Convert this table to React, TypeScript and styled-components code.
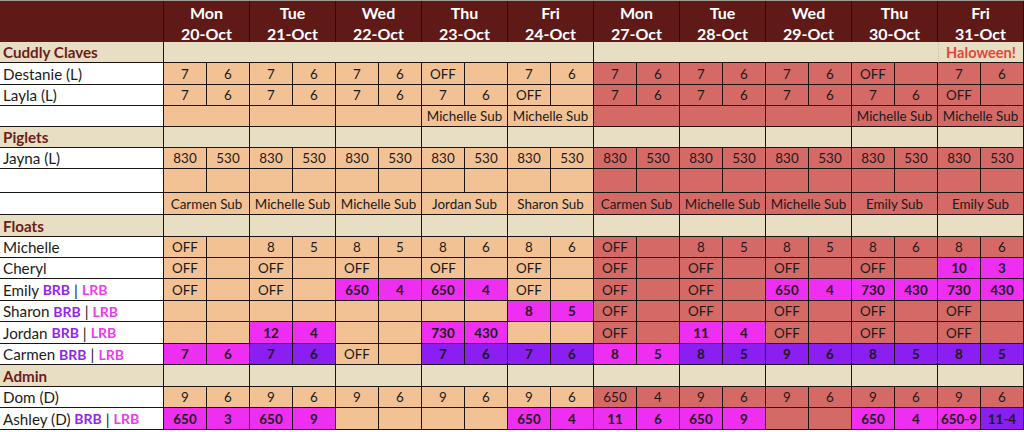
import React from "react";
import styled, { createGlobalStyle } from "styled-components";

const Global = createGlobalStyle`
  html, body { margin: 0; padding: 0; background: #ffffff; }
  body { font-family: Lato, "Open Sans", "Liberation Sans", sans-serif; }
`;

const C = {
  header: "#5f1a17",
  beige: "#e7dec3",
  peach: "#f2c194",
  red: "#d46966",
  magenta: "#ee2ef1",
  purple: "#8b1ef1",
  line: "#1c1410",
  maroon: "#6c1d1b",
  halo: "#e8443c",
};

const Sheet = styled.div`
  width: 1024px;
  border-top: 1px solid #a39c96;
  font-family: Lato, "Open Sans", "Liberation Sans", sans-serif;
  font-size: 13.4px;
  color: #1b1b1b;
`;

const Row = styled.div<{ $h: number }>`
  display: grid;
  grid-template-columns: 164px repeat(20, 43px);
  height: ${(p) => p.$h}px;
`;

const NameCell = styled.div<{ $section?: boolean }>`
  box-sizing: border-box;
  display: flex;
  align-items: center;
  padding-left: 3px;
  white-space: nowrap;
  border-right: 1px solid ${C.line};
  border-bottom: 1px solid ${C.line};
  background: ${(p) => (p.$section ? C.beige : "#ffffff")};
  color: ${(p) => (p.$section ? C.maroon : "#1b1b1b")};
  font-weight: ${(p) => (p.$section ? 700 : 400)};
  font-size: 15.2px;
`;

const HeaderCorner = styled.div`
  box-sizing: border-box;
  background: ${C.header};
  border-right: 1px solid ${C.line};
  border-bottom: 1px solid ${C.line};
`;

const DayHead = styled.div`
  grid-column: span 2;
  box-sizing: border-box;
  background: ${C.header};
  border-right: 1px solid ${C.line};
  border-bottom: 1px solid ${C.line};
  color: #ffffff;
  font-weight: 700;
  font-size: 16px;
  display: flex;
  flex-direction: column;
  align-items: center;
  justify-content: center;
  line-height: 21px;
  padding-top: 1px;
`;

const Cell = styled.div<{
  $span: number;
  $bg: string;
  $bold?: boolean;
  $noRight?: boolean;
  $dashLeft?: boolean;
  $fg?: string;
  $big?: boolean;
}>`
  grid-column: span ${(p) => p.$span};
  box-sizing: border-box;
  background: ${(p) => p.$bg};
  border-right: ${(p) => (p.$noRight ? "none" : `1px solid ${C.line}`)};
  border-bottom: 1px solid ${C.line};
  border-left: ${(p) => (p.$dashLeft ? "1px dotted #c9bca0" : "none")};
  display: flex;
  align-items: center;
  justify-content: center;
  white-space: nowrap;
  overflow: hidden;
  font-size: ${(p) => (p.$big ? "14.6px" : "inherit")};
  font-weight: ${(p) => (p.$bold ? 700 : 400)};
  color: ${(p) => p.$fg || "#1b1b1b"};
`;

const Tag = styled.span<{ $c: string }>`
  color: ${(p) => p.$c};
  font-weight: 700;
  font-size: 14px;
`;

const Sep = styled.span`
  margin: 0 4px;
`;

const days = [
  ["Mon", "20-Oct"],
  ["Tue", "21-Oct"],
  ["Wed", "22-Oct"],
  ["Thu", "23-Oct"],
  ["Fri", "24-Oct"],
  ["Mon", "27-Oct"],
  ["Tue", "28-Oct"],
  ["Wed", "29-Oct"],
  ["Thu", "30-Oct"],
  ["Fri", "31-Oct"],
];

const base = (day: number) => (day < 5 ? C.peach : C.red);

type Half = { t: string; c?: "m" | "p" };
const parse = (s: string): Half[] =>
  s.split(" ").map((tok) => {
    if (tok === "_") return { t: "" };
    if (tok.startsWith("m:")) return { t: tok.slice(2), c: "m" };
    if (tok.startsWith("p:")) return { t: tok.slice(2), c: "p" };
    return { t: tok };
  });

type RowDef =
  | { kind: "section"; title: string; h: number; mode: "week" | "day" }
  | { kind: "halves"; name: React.ReactNode; h: number; data: string }
  | { kind: "merged"; name: React.ReactNode; h: number; data: string[] };

const Tags = ({ name }: { name: string }) => (
  <>
    {name}&nbsp;<Tag $c="#9226ef">BRB</Tag>
    <Sep>|</Sep>
    <Tag $c="#ec3cf0">LRB</Tag>
  </>
);

const rows: RowDef[] = [
  { kind: "section", title: "Cuddly Claves", h: 21, mode: "week" },
  { kind: "halves", name: "Destanie (L)", h: 22, data: "7 6 7 6 7 6 OFF _ 7 6 7 6 7 6 7 6 OFF _ 7 6" },
  { kind: "halves", name: "Layla (L)", h: 21, data: "7 6 7 6 7 6 7 6 OFF _ 7 6 7 6 7 6 7 6 OFF _" },
  {
    kind: "merged",
    name: "",
    h: 21,
    data: ["", "", "", "Michelle Sub", "Michelle Sub", "", "", "", "Michelle Sub", "Michelle Sub"],
  },
  { kind: "section", title: "Piglets", h: 21, mode: "day" },
  { kind: "halves", name: "Jayna (L)", h: 21, data: Array(10).fill("830 530").join(" ") },
  { kind: "halves", name: "", h: 24, data: Array(20).fill("_").join(" ") },
  {
    kind: "merged",
    name: "",
    h: 22,
    data: [
      "Carmen Sub",
      "Michelle Sub",
      "Michelle Sub",
      "Jordan Sub",
      "Sharon Sub",
      "Carmen Sub",
      "Michelle Sub",
      "Michelle Sub",
      "Emily Sub",
      "Emily Sub",
    ],
  },
  { kind: "section", title: "Floats", h: 22, mode: "day" },
  { kind: "halves", name: "Michelle", h: 21, data: "OFF _ 8 5 8 5 8 6 8 6 OFF _ 8 5 8 5 8 6 8 6" },
  { kind: "halves", name: "Cheryl", h: 21, data: "OFF _ OFF _ OFF _ OFF _ OFF _ OFF _ OFF _ OFF _ OFF _ m:10 m:3" },
  {
    kind: "halves",
    name: <Tags name="Emily" />,
    h: 22,
    data: "OFF _ OFF _ m:650 m:4 m:650 m:4 OFF _ OFF _ OFF _ m:650 m:4 m:730 m:430 m:730 m:430",
  },
  {
    kind: "halves",
    name: <Tags name="Sharon" />,
    h: 21,
    data: "_ _ _ _ _ _ _ _ m:8 m:5 OFF _ OFF _ OFF _ OFF _ OFF _",
  },
  {
    kind: "halves",
    name: <Tags name="Jordan" />,
    h: 22,
    data: "_ _ m:12 m:4 _ _ m:730 m:430 _ _ OFF _ m:11 m:4 OFF _ OFF _ OFF _",
  },
  {
    kind: "halves",
    name: <Tags name="Carmen" />,
    h: 21,
    data: "m:7 m:6 p:7 p:6 OFF _ p:7 p:6 p:7 p:6 m:8 m:5 p:8 p:5 p:9 p:6 p:8 p:5 p:8 p:5",
  },
  { kind: "section", title: "Admin", h: 22, mode: "day" },
  { kind: "halves", name: "Dom (D)", h: 21, data: "9 6 9 6 9 6 9 6 9 6 650 4 9 6 9 6 9 6 9 6" },
  {
    kind: "halves",
    name: <Tags name="Ashley (D)" />,
    h: 22,
    data: "m:650 m:3 m:650 m:9 _ _ _ _ m:650 m:4 m:11 m:6 m:650 m:9 _ _ m:650 m:4 m:650-9 p:11-4",
  },
];

const SectionRow = ({ def }: { def: Extract<RowDef, { kind: "section" }> }) => (
  <Row $h={def.h}>
    <NameCell $section>{def.title}</NameCell>
    {def.mode === "week" ? (
      <>
        <Cell $span={10} $bg={C.beige} />
        <Cell $span={8} $bg={C.beige} $noRight />
        <Cell $span={2} $bg={C.beige} $dashLeft $bold $big $fg={C.halo}>
          Haloween!
        </Cell>
      </>
    ) : (
      days.map((_, i) => <Cell key={i} $span={2} $bg={C.beige} />)
    )}
  </Row>
);

export default function App() {
  return (
    <>
      <Global />
      <Sheet>
        <Row $h={41}>
          <HeaderCorner />
          {days.map(([d, dt], i) => (
            <DayHead key={i}>
              <span>{d}</span>
              <span>{dt}</span>
            </DayHead>
          ))}
        </Row>
        {rows.map((r, ri) => {
          if (r.kind === "section") return <SectionRow key={ri} def={r} />;
          if (r.kind === "merged")
            return (
              <Row key={ri} $h={r.h}>
                <NameCell>{r.name}</NameCell>
                {r.data.map((t, i) => (
                  <Cell key={i} $span={2} $bg={base(i)}>
                    {t}
                  </Cell>
                ))}
              </Row>
            );
          const halves = parse(r.data);
          return (
            <Row key={ri} $h={r.h}>
              <NameCell>{r.name}</NameCell>
              {halves.map((h, i) => (
                <Cell
                  key={i}
                  $span={1}
                  $bg={h.c === "m" ? C.magenta : h.c === "p" ? C.purple : base(Math.floor(i / 2))}
                  $bold={!!h.c}
                >
                  {h.t}
                </Cell>
              ))}
            </Row>
          );
        })}
      </Sheet>
    </>
  );
}
